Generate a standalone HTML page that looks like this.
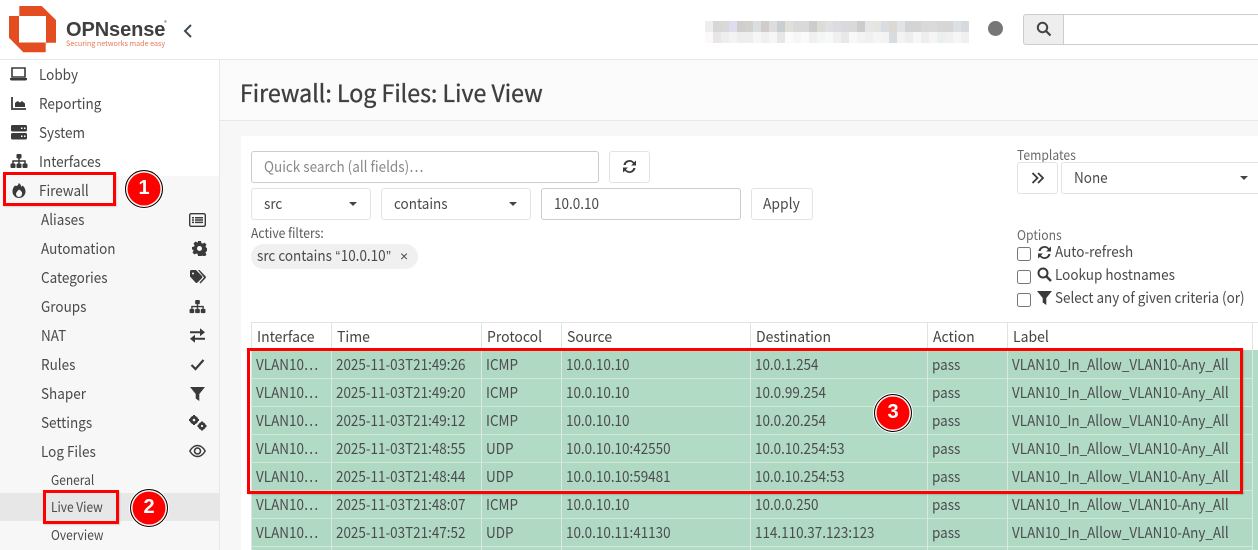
<!DOCTYPE html>
<html><head><meta charset="utf-8"><style>
*{box-sizing:border-box}
html,body{margin:0;padding:0;width:1258px;height:550px;overflow:hidden;background:#f7f7f7}
body{position:relative;font-family:"Noto Sans CJK SC","Liberation Sans",sans-serif;font-size:15px;color:#4a4a4a}
.a{position:absolute;white-space:nowrap}
.t{position:absolute;white-space:nowrap;line-height:20px;height:20px;transform:scaleX(.9);transform-origin:0 50%}
.q{font-family:"Liberation Sans",sans-serif;padding:0 .7px}
.box{position:absolute;background:#fff;border:1px solid #e3e3e3;border-radius:3px}
.ibox{position:absolute;background:#fff;border:1px solid #ccc;border-radius:3px}
.caret{position:absolute;width:0;height:0;border-left:4px solid transparent;border-right:4px solid transparent;border-top:4px solid #444}
.cb{position:absolute;width:14px;height:14px;border:1px solid #767676;border-radius:2.5px;background:#fff}
.red{position:absolute;border:3px solid #f00;box-shadow:1px 1px 1px rgba(0,0,0,.15)}
.badge{position:absolute;width:38px;height:38px;border-radius:50%;background:#f00;border:1px solid #000;box-shadow:inset 0 0 0 1.5px #fff,0 0 0 1px #fff;color:#fff;font-weight:700;font-size:20px;line-height:35px;text-align:center;font-family:"Liberation Sans",sans-serif}
svg{position:absolute;fill:#3a3a3a}
.row{position:absolute;left:251px;width:1001px;height:28px;border-bottom:1px solid #cfe8da}
.row span{position:absolute;top:4px;line-height:20px;white-space:nowrap;color:#4c4c50;transform:scaleX(.897);transform-origin:0 50%}
.v{position:absolute;width:1px;top:323px;height:227px;background:#d9e9e0}
.h{position:absolute;top:327px;line-height:20px;color:#444;transform:scaleX(.932);transform-origin:0 50%}
.px{position:absolute;left:705px;width:264px;height:11px;display:flex}
.px i{flex:1;display:block}
</style></head><body>
<div class="a" style="left:0;top:0;width:1258px;height:60px;background:#fff;border-bottom:1px solid #e7e7e7"></div>
<div class="a" style="left:220px;top:60px;width:1038px;height:61px;background:#fbfbfb;border-bottom:1px solid #e7e7e7"></div>
<div class="a" style="left:0;top:60px;width:220px;height:116px;background:#fff"></div>
<div class="a" style="left:219px;top:60px;width:1px;height:490px;background:#e7e7e7"></div>
<div class="a" style="left:0;top:493px;width:219px;height:28px;background:#e7e7e7"></div>

<!-- logo -->
<svg style="left:0;top:0" width="60" height="60" viewBox="0 0 60 60"><path fill="#e44d22" fill-rule="evenodd" d="M19.300 6H41.700L56 20V42.700H45.700V52.300H23.300L9 37.700V16H19.300Z M19 16V42.500H46V16Z"/></svg>
<div class="a" style="left:66px;top:17px;font:700 20px/26px 'Liberation Sans',sans-serif;color:#3f3f3f;letter-spacing:-.1px">OPNsense</div>
<div class="a" style="left:164px;top:19px;font-size:6px;line-height:8px;color:#555">®</div>
<div class="a" style="left:66px;top:39px;font-size:7.150px;line-height:10px;color:#e8764f">Securing networks made easy</div>
<svg style="left:182px;top:23px" width="12" height="16" viewBox="0 0 12 16"><path d="M9 2L3 8l6 6" fill="none" stroke="#3f4a55" stroke-width="2"/></svg>

<!-- blurred -->
<div class="px" style="top:21px"><i style="background:#eee"></i><i style="background:#d9d7d6"></i><i style="background:#d9d9d9"></i><i style="background:#dde"></i><i style="background:#cfcecd"></i><i style="background:#d4d0cd"></i><i style="background:#d9dee0"></i><i style="background:#d0cccb"></i><i style="background:#ddd"></i><i style="background:#c9ced0"></i><i style="background:#e0e0da"></i><i style="background:#d9d9d9"></i><i style="background:#d9d9d9"></i><i style="background:#ccc"></i><i style="background:#dcdcd6"></i><i style="background:#e0e0e4"></i><i style="background:#dcdce0"></i><i style="background:#dadade"></i><i style="background:#d9d9d9"></i><i style="background:#ccc"></i><i style="background:#e6e6e6"></i><i style="background:#e6e4e0"></i><i style="background:#d9dce0"></i><i style="background:#dcd9d2"></i><i style="background:#e0e4e8"></i><i style="background:#d4d4d4"></i><i style="background:#d4d4d4"></i><i style="background:#d9d9d9"></i><i style="background:#dadada"></i><i style="background:#d9d6d6"></i><i style="background:#d6d6d6"></i><i style="background:#dce0e4"></i><i style="background:#d6dade"></i></div>
<div class="px" style="top:32px"><i style="background:#fbfaf9"></i><i style="background:#e8e6e6"></i><i style="background:#ecefee"></i><i style="background:#f3f3f3"></i><i style="background:#eee"></i><i style="background:#eee"></i><i style="background:#f5f7f7"></i><i style="background:#f0f0f0"></i><i style="background:#f6f6f6"></i><i style="background:#e6e8e8"></i><i style="background:#fbfbfb"></i><i style="background:#f5f7f7"></i><i style="background:#fafafa"></i><i style="background:#f0f0f0"></i><i style="background:#f3f6f6"></i><i style="background:#f8f8f8"></i><i style="background:#f0f0f0"></i><i style="background:#e8e8e8"></i><i style="background:#f8f8f8"></i><i style="background:#f3f3f3"></i><i style="background:#f0f0f0"></i><i style="background:#f5f5f5"></i><i style="background:#f3f3f3"></i><i style="background:#d9dcdf"></i><i style="background:#f3f3f3"></i><i style="background:#eee"></i><i style="background:#f7f7f7"></i><i style="background:#eee"></i><i style="background:#f5f5f5"></i><i style="background:#ecefef"></i><i style="background:#f0f0f0"></i><i style="background:#f6f6f6"></i><i style="background:#eef0f2"></i></div>
<div class="a" style="left:988px;top:21px;width:15px;height:15px;border-radius:50%;background:#777"></div>
<div class="a" style="left:1023px;top:14px;width:41px;height:31px;background:#eee;border:1px solid #ccc;border-radius:3px 0 0 3px"></div>
<div class="a" style="left:1063px;top:14px;width:200px;height:31px;background:#fff;border:1px solid #ccc"></div>
<svg style="left:1036px;top:21px" width="16" height="16" viewBox="0 0 16 16"><circle cx="6.500" cy="6.500" r="4.700" fill="none" stroke="#444" stroke-width="2"/><path d="M10 10l4.500 4.500" stroke="#444" stroke-width="2.200"/></svg>

<!-- title -->
<div class="t" style="left:240px;top:76px;height:32px;line-height:32px;font-size:24px;color:#3f3f3f;transform:scaleX(.965);-webkit-text-stroke:.35px #3f3f3f">Firewall: Log Files: Live View</div>

<!-- nav -->
<div class="t" style="left:39px;top:65px">Lobby</div>
<div class="t" style="left:39px;top:94px">Reporting</div>
<div class="t" style="left:39px;top:123px">System</div>
<div class="t" style="left:39px;top:152px">Interfaces</div>
<div class="t" style="left:39px;top:181px">Firewall</div>
<div class="t" style="left:41px;top:210px">Aliases</div>
<div class="t" style="left:41px;top:239px">Automation</div>
<div class="t" style="left:41px;top:268px">Categories</div>
<div class="t" style="left:41px;top:297px">Groups</div>
<div class="t" style="left:41px;top:326px">NAT</div>
<div class="t" style="left:41px;top:355px">Rules</div>
<div class="t" style="left:41px;top:384px">Shaper</div>
<div class="t" style="left:41px;top:413px">Settings</div>
<div class="t" style="left:41px;top:442px">Log Files</div>
<div class="t" style="left:51px;top:470px;font-size:13.300px">General</div>
<div class="t" style="left:51px;top:497px;font-size:13.300px">Live View</div>
<div class="t" style="left:51px;top:525px;font-size:13.300px">Overview</div>

<!-- nav icons -->
<svg style="left:9px;top:66px" width="20" height="16" viewBox="0 0 20 16"><path d="M3 2h13v9H3z" fill="none" stroke="#3a3a3a" stroke-width="1.600"/><path d="M1 12h17v1.500l-1 1H2l-1-1z"/></svg>
<svg style="left:11px;top:96px" width="16" height="15" viewBox="0 0 16 15"><path d="M1 1v12h14" fill="none" stroke="#3a3a3a" stroke-width="1.800"/><path d="M4 11V7l2.500-2 2.500 1.500L11 5l3 2.500V11z"/></svg>
<svg style="left:11px;top:125px" width="16" height="15" viewBox="0 0 16 15"><rect x="0" y="0" width="16" height="6.500" rx="1.500"/><rect x="0" y="8" width="16" height="6.500" rx="1.500"/><path fill="#fff" d="M10 2.500h1.500v1.500H10zM13 2.500h1.500v1.500H13zM10 10.500h1.500v1.500H10zM13 10.500h1.500v1.500H13z"/></svg>
<svg style="left:10px;top:154px" width="18" height="15" viewBox="0 0 18 15"><rect x="6.500" y="0" width="5" height="4.500" rx="1"/><rect x="0.500" y="9.500" width="5" height="4.500" rx="1"/><rect x="6.500" y="9.500" width="5" height="4.500" rx="1"/><rect x="12.500" y="9.500" width="5" height="4.500" rx="1"/><path d="M3 9.500V7h12v2.500M9 4.500v5" fill="none" stroke="#3a3a3a" stroke-width="1.500"/></svg>
<svg style="left:12px;top:183px" width="14" height="15" viewBox="0 0 14 15"><path fill-rule="evenodd" d="M6.500 0C7 2.500 4 3.500 3 2.500 1 4.500.5 6.500.5 8.500a6.300 6.300 0 0 0 13 0C13.500 6 12 3.500 10.500 2.500L9.500 4C9 2 8 .7 6.500 0zM7 6.500c2.500 1.500 3.500 3 3 4.500a3 3 0 0 1-6 0C4 9.500 5.500 8 7 6.500z"/></svg>
<svg style="left:189px;top:213px" width="17" height="14" viewBox="0 0 17 14"><rect x=".7" y=".7" width="15.600" height="12.600" rx="1.500" fill="none" stroke="#3a3a3a" stroke-width="1.400"/><path d="M3 4h2v1.500H3zM3 6.300h2v1.500H3zM3 8.600h2v1.500H3zM6 4h8v1.500H6zM6 6.300h8v1.500H6zM6 8.600h8v1.500H6z"/></svg>
<svg style="left:192px;top:241px" width="15" height="15" viewBox="0 0 15 15"><path fill-rule="evenodd" d="M6 0h3l.4 2 1.300.6 1.800-1 2 2-1 1.800.6 1.300 1.900.4v3l-2 .4-.5 1.300 1 1.800-2 2-1.800-1-1.300.5L9 15H6l-.4-2-1.300-.5-1.800 1-2-2 1-1.800L1 8.400 0 9V6l2-.4.500-1.300-1-1.800 2-2 1.800 1L5.600 2zM7.500 5a2.500 2.500 0 1 0 0 5 2.500 2.500 0 0 0 0-5z"/></svg>
<svg style="left:190px;top:270px" width="16" height="14" viewBox="0 0 16 14"><path fill-rule="evenodd" d="M0 1.500A1.500 1.500 0 0 1 1.500 0H6l6 6a1.500 1.500 0 0 1 0 2l-4.500 4.500a1.500 1.500 0 0 1-2 0L0 6.500zM3 2.500a1 1 0 1 0 0 2 1 1 0 0 0 0-2z"/><path d="M8 0h1.500l6 6.300a1.500 1.500 0 0 1 0 2L10.500 13.500 9.500 12.500 14 7.500z"/></svg>
<svg style="left:189px;top:300px" width="17" height="14" viewBox="0 0 18 15"><rect x="6.500" y="0" width="5" height="4.500" rx="1"/><rect x="0.500" y="9.500" width="5" height="4.500" rx="1"/><rect x="6.500" y="9.500" width="5" height="4.500" rx="1"/><rect x="12.500" y="9.500" width="5" height="4.500" rx="1"/><path d="M3 9.500V7h12v2.500M9 4.500v5" fill="none" stroke="#3a3a3a" stroke-width="1.500"/></svg>
<svg style="left:190px;top:328px" width="15" height="15" viewBox="0 0 15 15"><path d="M0 3h10V0l5 4-5 4V5H0zM15 9.500H5v-3l-5 4 5 4v-3h10z" transform="translate(0 .2)"/></svg>
<svg style="left:190px;top:358px" width="15" height="13" viewBox="0 0 15 13"><path d="M1.500 7l4 4 8-9" fill="none" stroke="#3a3a3a" stroke-width="2.200"/></svg>
<svg style="left:190px;top:387px" width="15" height="14" viewBox="0 0 15 14"><path d="M0 0h15L9.300 7v7L5.700 11.500V7z"/></svg>
<svg style="left:188px;top:415px" width="19" height="16" viewBox="0 0 19 16"><circle cx="6" cy="5" r="2.800" fill="none" stroke="#3a3a3a" stroke-width="3"/><circle cx="14" cy="11" r="2.500" fill="none" stroke="#3a3a3a" stroke-width="2.800"/><path d="M5 0h2v2H5zM5 8h2v2H5zM1 4h2v2H1zM9 4h2v2H9zM13 6.500h2v2h-2zM13 13.500h2v2h-2zM9.500 10h2v2h-2zM16.500 10h2v2h-2z"/></svg>
<svg style="left:189px;top:444px" width="17" height="14" viewBox="0 0 17 14"><path d="M.8 7C3 3.200 5.500 1.500 8.500 1.500S14 3.200 16.200 7C14 10.800 11.500 12.500 8.500 12.500S3 10.800.8 7z" fill="none" stroke="#3a3a3a" stroke-width="1.400"/><circle cx="8.500" cy="7" r="3" fill="none" stroke="#3a3a3a" stroke-width="1.600"/></svg>

<!-- panel -->
<div class="a" style="left:241px;top:136px;width:1017px;height:414px;background:#fff"></div>
<div class="ibox" style="left:251px;top:151px;width:348px;height:32px"></div>
<div class="t" style="left:264px;top:157px;color:#8a8a8a">Quick search (all fields)…</div>
<div class="box" style="left:609px;top:151px;width:41px;height:32px"></div>
<svg style="left:622px;top:159px" width="15" height="15" viewBox="0 0 15 15"><path d="M1.500 6A6 6 0 0 1 12 3.200L14 1.500V6.500H9l2-1.800A4 4 0 0 0 3.700 6zM13.500 9A6 6 0 0 1 3 11.800L1 13.500V8.500h5L4 10.300A4 4 0 0 0 11.300 9z"/></svg>
<div class="box" style="left:251px;top:188px;width:120px;height:32px"></div>
<div class="t" style="left:264px;top:194px">src</div><div class="caret" style="left:349px;top:202px"></div>
<div class="box" style="left:381px;top:188px;width:150px;height:32px"></div>
<div class="t" style="left:394px;top:194px">contains</div><div class="caret" style="left:509px;top:202px"></div>
<div class="ibox" style="left:541px;top:188px;width:200px;height:32px"></div>
<div class="t" style="left:554px;top:194px">10.0.10</div>
<div class="box" style="left:751px;top:188px;width:62px;height:32px"></div>
<div class="t" style="left:763px;top:194px;transform:scaleX(.925)">Apply</div>
<div class="t" style="left:251px;top:222px;font-size:13.500px;color:#5a5a5a">Active filters:</div>
<div class="a" style="left:251px;top:244px;width:167px;height:25px;border-radius:13px;background:#f0f0f0"></div>
<div class="t" style="left:257px;top:246px">src contains <span class="q">“</span>10.0.10<span class="q">”</span></div>
<div class="a" style="left:400px;top:246px;line-height:20px;font-size:14px;font-family:'Liberation Sans',sans-serif">×</div>

<div class="t" style="left:1017px;top:144px;font-size:13.500px;color:#6a6a6a">Templates</div>
<div class="box" style="left:1017px;top:162px;width:41px;height:32px"></div>
<svg style="left:1031px;top:172px" width="14" height="12" viewBox="0 0 14 12"><path d="M1.500 1l5 5-5 5M7 1l5 5-5 5" fill="none" stroke="#3a3a3a" stroke-width="1.800"/></svg>
<div class="box" style="left:1061px;top:162px;width:205px;height:32px"></div>
<div class="t" style="left:1074px;top:168px">None</div><div class="caret" style="left:1240px;top:176px"></div>
<div class="t" style="left:1017px;top:224px;font-size:13.500px;color:#6a6a6a">Options</div>
<div class="cb" style="left:1017px;top:247px"></div>
<svg style="left:1037px;top:245px" width="15" height="15" viewBox="0 0 15 15"><path d="M1.500 6A6 6 0 0 1 12 3.200L14 1.500V6.500H9l2-1.800A4 4 0 0 0 3.700 6zM13.500 9A6 6 0 0 1 3 11.800L1 13.500V8.500h5L4 10.300A4 4 0 0 0 11.300 9z"/></svg>
<div class="t" style="left:1055px;top:242px">Auto-refresh</div>
<div class="cb" style="left:1017px;top:270px"></div>
<svg style="left:1037px;top:267px" width="15" height="15" viewBox="0 0 15 15"><circle cx="6" cy="6" r="4.500" fill="none" stroke="#3a3a3a" stroke-width="2"/><path d="M9.500 9.500l4.500 4.500" stroke="#3a3a3a" stroke-width="2.400"/></svg>
<div class="t" style="left:1055px;top:265px">Lookup hostnames</div>
<div class="cb" style="left:1017px;top:293px"></div>
<svg style="left:1037px;top:291px" width="15" height="14" viewBox="0 0 15 14"><path d="M0 0h15L9.300 7v7L5.700 11.500V7z"/></svg>
<div class="t" style="left:1055px;top:288px;transform:scaleX(.895)">Select any of given criteria (or)</div>

<!-- table -->
<div class="a" style="left:251px;top:322px;width:1007px;height:1px;background:#e3e3e3"></div>
<div class="a" style="left:251px;top:350px;width:1007px;height:200px;background:#b2dbc5"></div>
<div class="h" style="left:257px">Interface</div><div class="h" style="left:337px">Time</div><div class="h" style="left:487px">Protocol</div><div class="h" style="left:567px">Source</div><div class="h" style="left:756px">Destination</div><div class="h" style="left:933px">Action</div><div class="h" style="left:1013px">Label</div>

<div class="row" style="top:351px;background:#b0d9c3"><span style="left:5px">VLAN10…</span><span style="left:85px">2025-11-03T21:49:26</span><span style="left:235px">ICMP</span><span style="left:315px">10.0.10.10</span><span style="left:504px">10.0.1.254</span><span style="left:681px">pass</span><span style="left:761px">VLAN10_In_Allow_VLAN10-Any_All</span></div>
<div class="row" style="top:379px"><span style="left:5px">VLAN10…</span><span style="left:85px">2025-11-03T21:49:20</span><span style="left:235px">ICMP</span><span style="left:315px">10.0.10.10</span><span style="left:504px">10.0.99.254</span><span style="left:681px">pass</span><span style="left:761px">VLAN10_In_Allow_VLAN10-Any_All</span></div>
<div class="row" style="top:407px;background:#b0d9c3"><span style="left:5px">VLAN10…</span><span style="left:85px">2025-11-03T21:49:12</span><span style="left:235px">ICMP</span><span style="left:315px">10.0.10.10</span><span style="left:504px">10.0.20.254</span><span style="left:681px">pass</span><span style="left:761px">VLAN10_In_Allow_VLAN10-Any_All</span></div>
<div class="row" style="top:435px"><span style="left:5px">VLAN10…</span><span style="left:85px">2025-11-03T21:48:55</span><span style="left:235px">UDP</span><span style="left:315px">10.0.10.10:42550</span><span style="left:504px">10.0.10.254:53</span><span style="left:681px">pass</span><span style="left:761px">VLAN10_In_Allow_VLAN10-Any_All</span></div>
<div class="row" style="top:463px;background:#b0d9c3"><span style="left:5px">VLAN10…</span><span style="left:85px">2025-11-03T21:48:44</span><span style="left:235px">UDP</span><span style="left:315px">10.0.10.10:59481</span><span style="left:504px">10.0.10.254:53</span><span style="left:681px">pass</span><span style="left:761px">VLAN10_In_Allow_VLAN10-Any_All</span></div>
<div class="row" style="top:491px"><span style="left:5px">VLAN10…</span><span style="left:85px">2025-11-03T21:48:07</span><span style="left:235px">ICMP</span><span style="left:315px">10.0.10.10</span><span style="left:504px">10.0.0.250</span><span style="left:681px">pass</span><span style="left:761px">VLAN10_In_Allow_VLAN10-Any_All</span></div>
<div class="row" style="top:519px;background:#b0d9c3"><span style="left:5px">VLAN10…</span><span style="left:85px">2025-11-03T21:47:52</span><span style="left:235px">UDP</span><span style="left:315px">10.0.10.11:41130</span><span style="left:504px">114.110.37.123:123</span><span style="left:681px">pass</span><span style="left:761px">VLAN10_In_Allow_VLAN10-Any_All</span></div>
<div class="v" style="left:251px"></div><div class="v" style="left:331px"></div><div class="v" style="left:481px"></div><div class="v" style="left:561px"></div><div class="v" style="left:750px"></div><div class="v" style="left:927px"></div><div class="v" style="left:1007px"></div><div class="v" style="left:1252px"></div>

<!-- annotations -->
<div class="red" style="left:3px;top:172px;width:113px;height:34px"></div>
<div class="red" style="left:43px;top:490px;width:76px;height:34px"></div>
<div class="red" style="left:247px;top:348px;width:996px;height:146px"></div>
<div class="badge" style="left:125px;top:170px">1</div>
<div class="badge" style="left:130px;top:489px">2</div>
<div class="badge" style="left:874px;top:394px">3</div>
</body></html>
